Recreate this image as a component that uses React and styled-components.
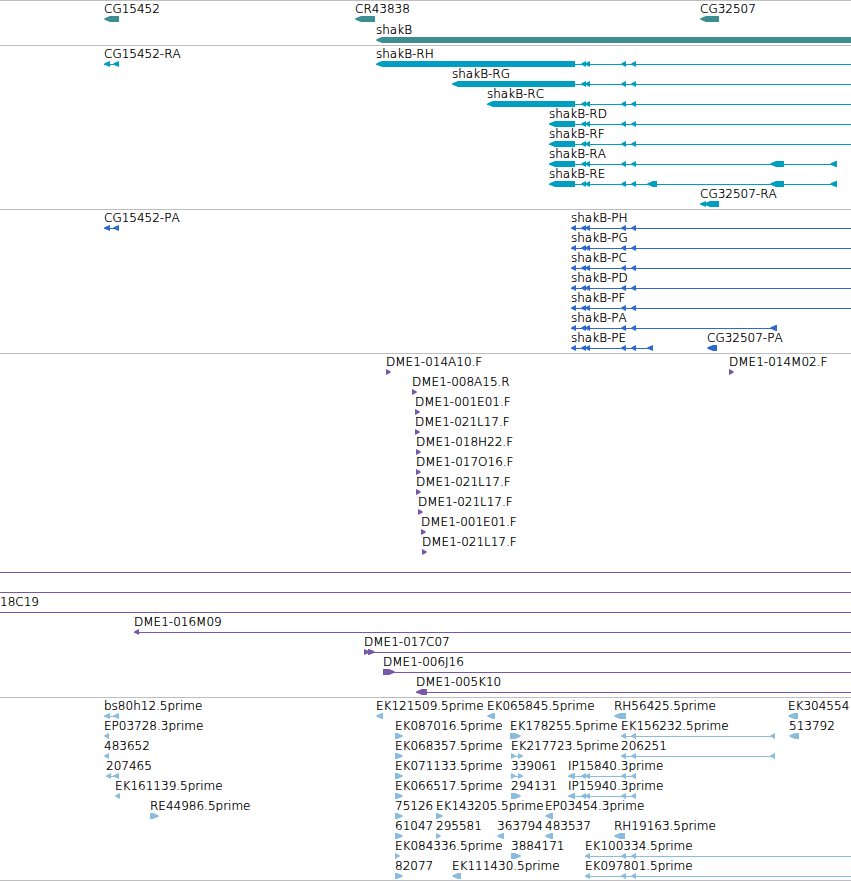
import styled, { createGlobalStyle } from "styled-components";

const GlobalStyle = createGlobalStyle`
  body {
    margin: 0;
    background: white;
    color: black;
    font-family: "DejaVu Sans", Verdana, sans-serif;
    font-size: 12px;
    font-kerning: none;
  }
`;

const Browser = styled.main`
  overflow: hidden;
  border-bottom: 1px solid #bebebe;
`;

const Track = styled.section`
  border-top: 1px solid #bebebe;
  padding-bottom: ${(props) => (props.$tight ? "2px" : "3px")};
  color: ${(props) => props.$color};
`;

const Row = styled.div`
  display: grid;
  grid-template-columns: minmax(0, 1fr);
  height: ${(props) => (props.$tall ? "21px" : "20px")};
`;

/* every feature of a row shares the same grid cell */
const FeatureBox = styled.div`
  grid-area: 1 / 1;
  min-width: 0;
`;

/* the shadow darkens the thin strokes */
const Label = styled.span`
  display: block;
  width: max-content;
  height: 14px;
  padding-top: 1px;
  line-height: 14px;
  color: black;
  font-weight: 200;
  text-shadow: 0 0 0 black;
  white-space: nowrap;
`;

const Glyph = styled.svg`
  display: block;
  width: 100%;
  height: 6px;
  overflow: visible;
  fill: currentColor;
`;

const OPEN = null; // runs past the right edge

const left = (label, segments, open = false) => ({
  label,
  segments,
  open,
  start: segments[0][0],
});
const right = (label, segments, open = false) => ({
  ...left(label, segments, open),
  forward: true,
});
const span = (label) => ({ label, segments: [], open: true, start: 0 });

const pair = [
  [581, 586],
  [585, 590],
];
const exons = [
  [621, 626],
  [631, 636],
];
const common = [...pair, ...exons];
const coding = [[571, 576], ...common];
const read = (label) => right(label, [[395, 403]]);
const end = (label, x) => right(label, [[x, x + 5]]);

const tracks = [
  {
    name: "Gene",
    color: "#3d8d92",
    tall: true,
    tight: true,
    rows: [
      [
        left("CG15452", [[104, 119]]),
        left("CR43838", [[355, 375]]),
        left("CG32507", [[700, 719]]),
      ],
      [left("shakB", [[376, OPEN]])],
    ],
  },
  {
    name: "Transcript",
    color: "#009fc1",
    rows: [
      [
        left("CG15452-RA", [
          [104, 110],
          [113, 119],
        ]),
        left("shakB-RH", [[376, 575], ...common], true),
      ],
      [left("shakB-RG", [[452, 575], ...common], true)],
      [left("shakB-RC", [[487, 575], ...common], true)],
      [left("shakB-RD", [[549, 575], ...common], true)],
      [left("shakB-RF", [[549, 575], ...common], true)],
      [left("shakB-RA", [[549, 575], ...common, [770, 784], [830, 837]])],
      [
        left("shakB-RE", [
          [549, 575],
          ...common,
          [647, 657],
          [770, 784],
          [830, 837],
        ]),
      ],
      [
        left("CG32507-RA", [
          [700, 706],
          [704, 719],
        ]),
      ],
    ],
  },
  {
    name: "CDS",
    color: "#2f69cc",
    rows: [
      [
        left("CG15452-PA", [
          [104, 110],
          [113, 119],
        ]),
        left("shakB-PH", coding, true),
      ],
      [left("shakB-PG", coding, true)],
      [left("shakB-PC", coding, true)],
      [left("shakB-PD", coding, true)],
      [left("shakB-PF", coding, true)],
      [left("shakB-PA", [...coding, [770, 777]])],
      [
        left("shakB-PE", [...coding, [647, 653]]),
        left("CG32507-PA", [[707, 717]]),
      ],
    ],
  },
  {
    name: "BAC",
    color: "#7859a9",
    rows: [
      [end("DME1-014A10.F", 386), end("DME1-014M02.F", 729)],
      [end("DME1-008A15.R", 412)],
      [end("DME1-001E01.F", 415)],
      [end("DME1-021L17.F", 415)],
      [end("DME1-018H22.F", 416)],
      [end("DME1-017O16.F", 416)],
      [end("DME1-021L17.F", 416)],
      [end("DME1-021L17.F", 418)],
      [end("DME1-001E01.F", 421)],
      [end("DME1-021L17.F", 422)],
      [span("")],
      [span("")],
      [span("18C19")],
      [left("DME1-016M09", [[134, 139]], true)],
      [
        right(
          "DME1-017C07",
          [
            [364, 370],
            [368, 375],
          ],
          true
        ),
      ],
      [right("DME1-006J16", [[383, 395]], true)],
      [left("DME1-005K10", [[416, 427]], true)],
    ],
  },
  {
    name: "cDNA and insertions",
    color: "#8abddd",
    tight: true,
    rows: [
      [
        left("bs80h12.5prime", [
          [104, 110],
          [113, 119],
        ]),
        left("EK121509.5prime", [[376, 383]]),
        left("EK065845.5prime", [[487, 495]]),
        left("RH56425.5prime", [[614, 626]]),
        left("EK304554", [[788, 798]]),
      ],
      [
        left("EP03728.3prime", [[104, 109]]),
        read("EK087016.5prime"),
        right("EK178255.5prime", [[510, 521]]),
        left("EK156232.5prime", [...exons, [770, 775]]),
        left("513792", [[789, 799]]),
      ],
      [
        left("483652", [[104, 109]]),
        read("EK068357.5prime"),
        right("EK217723.5prime", [
          [511, 516],
          [518, 523],
        ]),
        left("206251", [...exons, [770, 775]]),
      ],
      [
        left("207465", [
          [106, 111],
          [113, 119],
        ]),
        read("EK071133.5prime"),
        right("339061", [
          [511, 516],
          [518, 523],
        ]),
        left("IP15840.3prime", [[568, 575], ...common]),
      ],
      [
        left("EK161139.5prime", [[115, 120]]),
        read("EK066517.5prime"),
        right("294131", [[511, 521]]),
        left("IP15940.3prime", [[568, 575], ...common]),
      ],
      [
        right("RE44986.5prime", [[150, 159]]),
        read("75126"),
        right("EK143205.5prime", [[436, 443]]),
        left("EP03454.3prime", [[545, 553]]),
      ],
      [
        read("61047"),
        right("295581", [[436, 441]]),
        left("363794", [[497, 504]]),
        left("483537", [[545, 553]]),
        left("RH19163.5prime", [[614, 625]]),
      ],
      [
        right("EK084336.5prime", [[395, 400]]),
        right("3884171", [[511, 521]]),
        left("EK100334.5prime", [[585, 590], ...exons], true),
      ],
      [
        read("82077"),
        left("EK111430.5prime", [[452, 461]]),
        left("EK097801.5prime", [[585, 590], ...exons], true),
      ],
    ],
  },
];

function Segment({ from, to, forward }) {
  if (to === OPEN) {
    return (
      <>
        <polygon points="0,3 1,2 6,0 7,0 7,6 6,6 1,4" />
        <rect x="7" width="100%" height="6" />
      </>
    );
  }
  const head = Math.min(6, to - from);
  const tip = forward ? to : from;
  const neck = forward ? tip - 1 : tip + 1;
  const base = forward ? tip - head : tip + head;
  const tail = forward ? from : to;
  return (
    <polygon
      points={`${tip},3 ${neck},2 ${base},0 ${tail},0 ${tail},6 ${base},6 ${neck},4`}
    />
  );
}

function Feature({ feature }) {
  const { label, start, segments, open, forward } = feature;
  const last = segments[segments.length - 1];
  const length = open || last[1] === OPEN ? "100%" : last[1] - start;

  return (
    <FeatureBox style={{ marginLeft: start }}>
      <Label>{label}</Label>
      <Glyph aria-hidden="true">
        {(open || segments.length > 1) && (
          <rect y="3" width={length} height="1" />
        )}
        {segments.map(([from, to]) => (
          <Segment
            key={from}
            from={from - start}
            to={to === OPEN ? OPEN : to - start}
            forward={forward}
          />
        ))}
      </Glyph>
    </FeatureBox>
  );
}

export default function App() {
  return (
    <>
      <GlobalStyle />
      <Browser>
        {tracks.map((track) => (
          <Track
            key={track.name}
            aria-label={track.name}
            $color={track.color}
            $tight={track.tight}
          >
            {track.rows.map((row, i) => (
              <Row key={i} $tall={track.tall}>
                {row.map((feature) => (
                  <Feature key={feature.label} feature={feature} />
                ))}
              </Row>
            ))}
          </Track>
        ))}
      </Browser>
    </>
  );
}
